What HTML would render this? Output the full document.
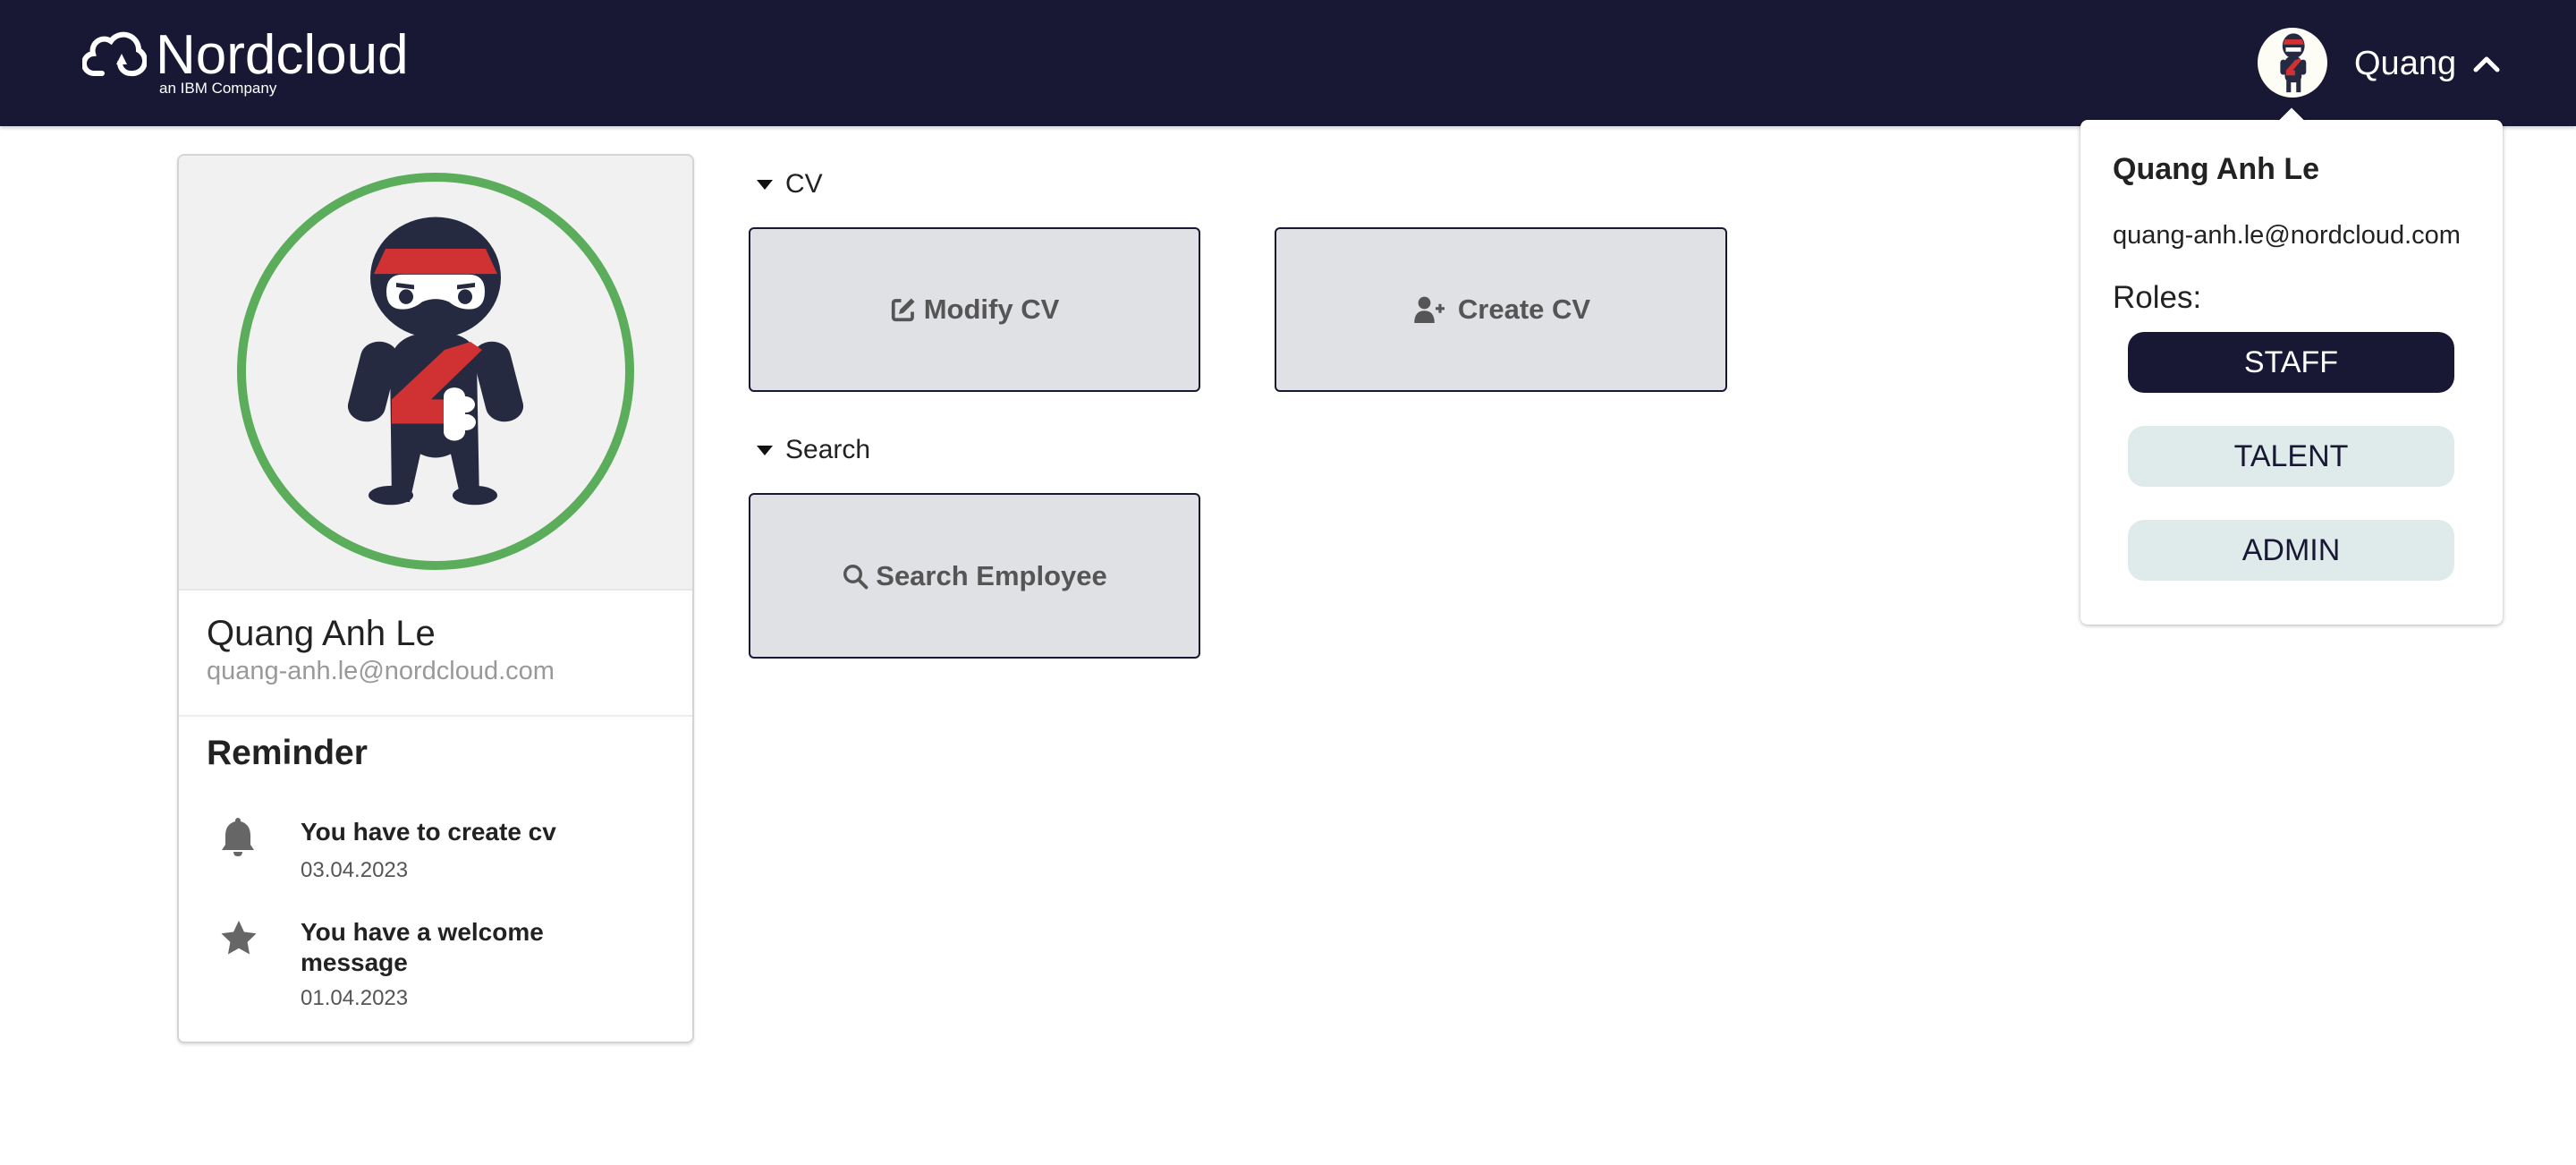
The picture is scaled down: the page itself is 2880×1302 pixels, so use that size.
<!DOCTYPE html>
<html><head><meta charset="utf-8"><style>
*{margin:0;padding:0;box-sizing:border-box}
body{width:2880px;height:1302px;background:#fff;position:relative;overflow:hidden;font-family:"Liberation Sans",sans-serif}
.abs{position:absolute}
#hdr{left:0;top:0;width:2880px;height:141px;background:#181834;box-shadow:0 2px 4px rgba(0,0,0,.2)}
.btn{position:absolute;background:#e0e1e4;border:2px solid #181834;border-radius:6px;display:flex;align-items:center;justify-content:center;font-weight:bold;font-size:31px;color:#555;gap:8px}
.sec{position:absolute;font-size:30px;color:#222;display:flex;align-items:center}
.sec:before{content:"";border-left:9px solid transparent;border-right:9px solid transparent;border-top:11px solid #111;margin-right:14px;margin-left:4px}
.role{position:absolute;left:2379px;width:365px;height:68px;border-radius:18px;background:#dfeaea;color:#181834;font-size:34px;display:flex;align-items:center;justify-content:center}
</style></head><body>
<div id="hdr" class="abs"></div>
<svg class="abs" style="left:92px;top:28px" width="72" height="60" viewBox="0 0 72 60"><path d="M22 54H14a11 11 0 0 1-2-22 13 13 0 0 1 20-14 17 17 0 0 1 31 10 14 14 0 0 1-9 26 12 12 0 0 1-12-12" fill="none" stroke="#fff" stroke-width="6" stroke-linecap="round"/><path d="M38 44l6-12 6 12z" fill="#fff"/></svg>
<div class="abs" style="left:174px;top:26px;font-size:62px;color:#fff">Nordcloud</div>
<div class="abs" style="left:178px;top:89px;font-size:17px;color:#fff">an IBM Company</div>
<div class="abs" style="left:2524px;top:31px;width:78px;height:78px;border-radius:50%;background:#fdfdf5"></div>
<svg class="abs" style="left:2540px;top:36px" width="46" height="68" viewBox="380 290 200 400"><ellipse cx="487" cy="380" rx="73" ry="82" fill="#262a40"/><path d="M431 337h112l13 34H418z" fill="#d03132"/><path d="M436 390h100v28h-100z" fill="#fff"/><rect x="430" y="450" width="110" height="170" rx="40" fill="#262a40"/><rect x="400" y="470" width="40" height="100" rx="20" fill="#262a40"/><rect x="530" y="470" width="40" height="100" rx="20" fill="#262a40"/><rect x="440" y="600" width="30" height="85" fill="#262a40"/><rect x="505" y="600" width="30" height="85" fill="#262a40"/><path d="M497 474l29-11 13 11-57 67h15v33h-59v-33z" fill="#d03132"/></svg>
<div class="abs" style="left:2632px;top:50px;font-size:38px;color:#fff">Quang</div>
<svg class="abs" style="left:2764px;top:60px" width="32" height="22" viewBox="0 0 32 22"><path d="M4 18L16 6l12 12" fill="none" stroke="#fff" stroke-width="5" stroke-linecap="round" stroke-linejoin="round"/></svg>

<div class="abs" style="left:2326px;top:134px;width:472px;height:564px;background:#fff;border-radius:8px;box-shadow:0 1px 5px rgba(0,0,0,.3)"></div>
<div class="abs" style="left:2551px;top:125px;width:22px;height:22px;background:#fff;transform:rotate(45deg);box-shadow:-1px -1px 2px rgba(0,0,0,.15)"></div>
<div class="abs" style="left:2362px;top:170px;font-size:34px;font-weight:bold;color:#222">Quang Anh Le</div>
<div class="abs" style="left:2362px;top:247px;font-size:29px;color:#222">quang-anh.le@nordcloud.com</div>
<div class="abs" style="left:2362px;top:313px;font-size:35px;color:#222">Roles:</div>
<div class="role" style="top:371px;background:#181834;color:#fff">STAFF</div>
<div class="role" style="top:476px">TALENT</div>
<div class="role" style="top:581px">ADMIN</div>

<div class="abs" style="left:198px;top:172px;width:578px;height:994px;border:2px solid #d4d4d4;border-radius:8px;box-shadow:0 2px 3px rgba(0,0,0,.12);overflow:hidden;background:#fff">
 <div style="height:486px;background:#f1f1f1;border-bottom:2px solid #e6e6e6"></div>
 <div style="height:141px;border-bottom:2px solid #eee"></div>
</div>
<svg class="abs" style="left:0;top:0" width="800" height="700">
<circle cx="487" cy="415" r="217" fill="none" stroke="#5bad5b" stroke-width="10"/>
<g transform="matrix(1 0 0 0.825 0 0)">
<rect x="396" y="462" width="42" height="110" rx="21" transform="rotate(12 417 517)" fill="#262a40"/>
<rect x="536" y="462" width="42" height="110" rx="21" transform="rotate(-12 557 517)" fill="#262a40"/>
<path d="M436 490q5-40 51-40q46 0 46 40l3 190h-20l-12-65q-17 10-34 0l-12 65h-20z" fill="#262a40"/>
<ellipse cx="437" cy="671" rx="25" ry="13" fill="#262a40"/><ellipse cx="531" cy="671" rx="25" ry="13" fill="#262a40"/>
<ellipse cx="487" cy="376" rx="73" ry="82" fill="#262a40"/>
<path d="M431 337h112l13 34H418z" fill="#d03132"/>
<path d="M450 372h74q18 0 18 23q0 24-18 24q-12 0-22-10q-15-8-30 0q-10 10-22 10q-18 0-18-24q0-23 18-23z" fill="#fff"/>
<ellipse cx="454" cy="402" rx="8" ry="10" fill="#262a40"/><ellipse cx="520" cy="402" rx="8" ry="10" fill="#262a40"/>
<path d="M443 383l20 3v6l-20-3z M531 383l-20 3v6l20-3z" fill="#262a40"/>
<path d="M497 474l29-11 13 11-57 67h15v33h-59v-33z" fill="#d03132"/>
<rect x="496" y="525" width="24" height="72" rx="12" fill="#fff"/><circle cx="520" cy="548" r="11" fill="#fff"/><circle cx="521" cy="572" r="11" fill="#fff"/>
</g>
</svg>
<div class="abs" style="left:231px;top:686px;font-size:40px;color:#222">Quang Anh Le</div>
<div class="abs" style="left:231px;top:734px;font-size:29px;color:#999">quang-anh.le@nordcloud.com</div>
<div class="abs" style="left:231px;top:820px;font-size:39px;font-weight:bold;color:#222">Reminder</div>
<svg class="abs" style="left:246px;top:912px" width="40" height="46" viewBox="0 0 40 46"><path d="M20 2q3 0 3 4q11 3 11 16v10l4 6H2l4-6V22q0-13 11-16q0-4 3-4z M15 40h10q0 5-5 5t-5-5z" fill="#666"/></svg>
<div class="abs" style="left:336px;top:914px;font-size:28px;font-weight:bold;color:#222">You have to create cv</div>
<div class="abs" style="left:336px;top:959px;font-size:24px;color:#555">03.04.2023</div>
<svg class="abs" style="left:244px;top:1026px" width="46" height="46" viewBox="0 0 24 24"><path d="M12 1.5l3.1 6.6 7.1.9-5.2 5 1.3 7.1L12 17.6l-6.3 3.5L7 14l-5.2-5 7.1-.9z" fill="#666"/></svg>
<div class="abs" style="left:336px;top:1025px;font-size:28px;font-weight:bold;color:#222;line-height:34px;width:300px">You have a welcome message</div>
<div class="abs" style="left:336px;top:1102px;font-size:24px;color:#555">01.04.2023</div>

<div class="sec" style="left:842px;top:189px">CV</div>
<div class="btn" style="left:837px;top:254px;width:505px;height:184px"><svg width="30" height="30" viewBox="0 0 24 24"><path d="M10 4H5a2 2 0 0 0-2 2v13a2 2 0 0 0 2 2h13a2 2 0 0 0 2-2v-5" fill="none" stroke="#555" stroke-width="3"/><path d="M19 2l3 3-10 10-4 1 1-4z" fill="#555"/></svg>Modify CV</div>
<div class="btn" style="left:1425px;top:254px;width:506px;height:184px"><svg width="44" height="30" viewBox="0 0 32 24"><circle cx="10" cy="6" r="5.5" fill="#555"/><path d="M1 24q0-11 9-11t9 11z" fill="#555"/><path d="M24 7v8M20 11h8" stroke="#555" stroke-width="2.5"/></svg>Create CV</div>
<div class="sec" style="left:842px;top:486px">Search</div>
<div class="btn" style="left:837px;top:551px;width:505px;height:185px"><svg width="30" height="30" viewBox="0 0 24 24"><circle cx="10" cy="10" r="7" fill="none" stroke="#555" stroke-width="2.8"/><path d="M15 15l7 7" stroke="#555" stroke-width="3" stroke-linecap="round"/></svg>Search Employee</div>
</body></html>
